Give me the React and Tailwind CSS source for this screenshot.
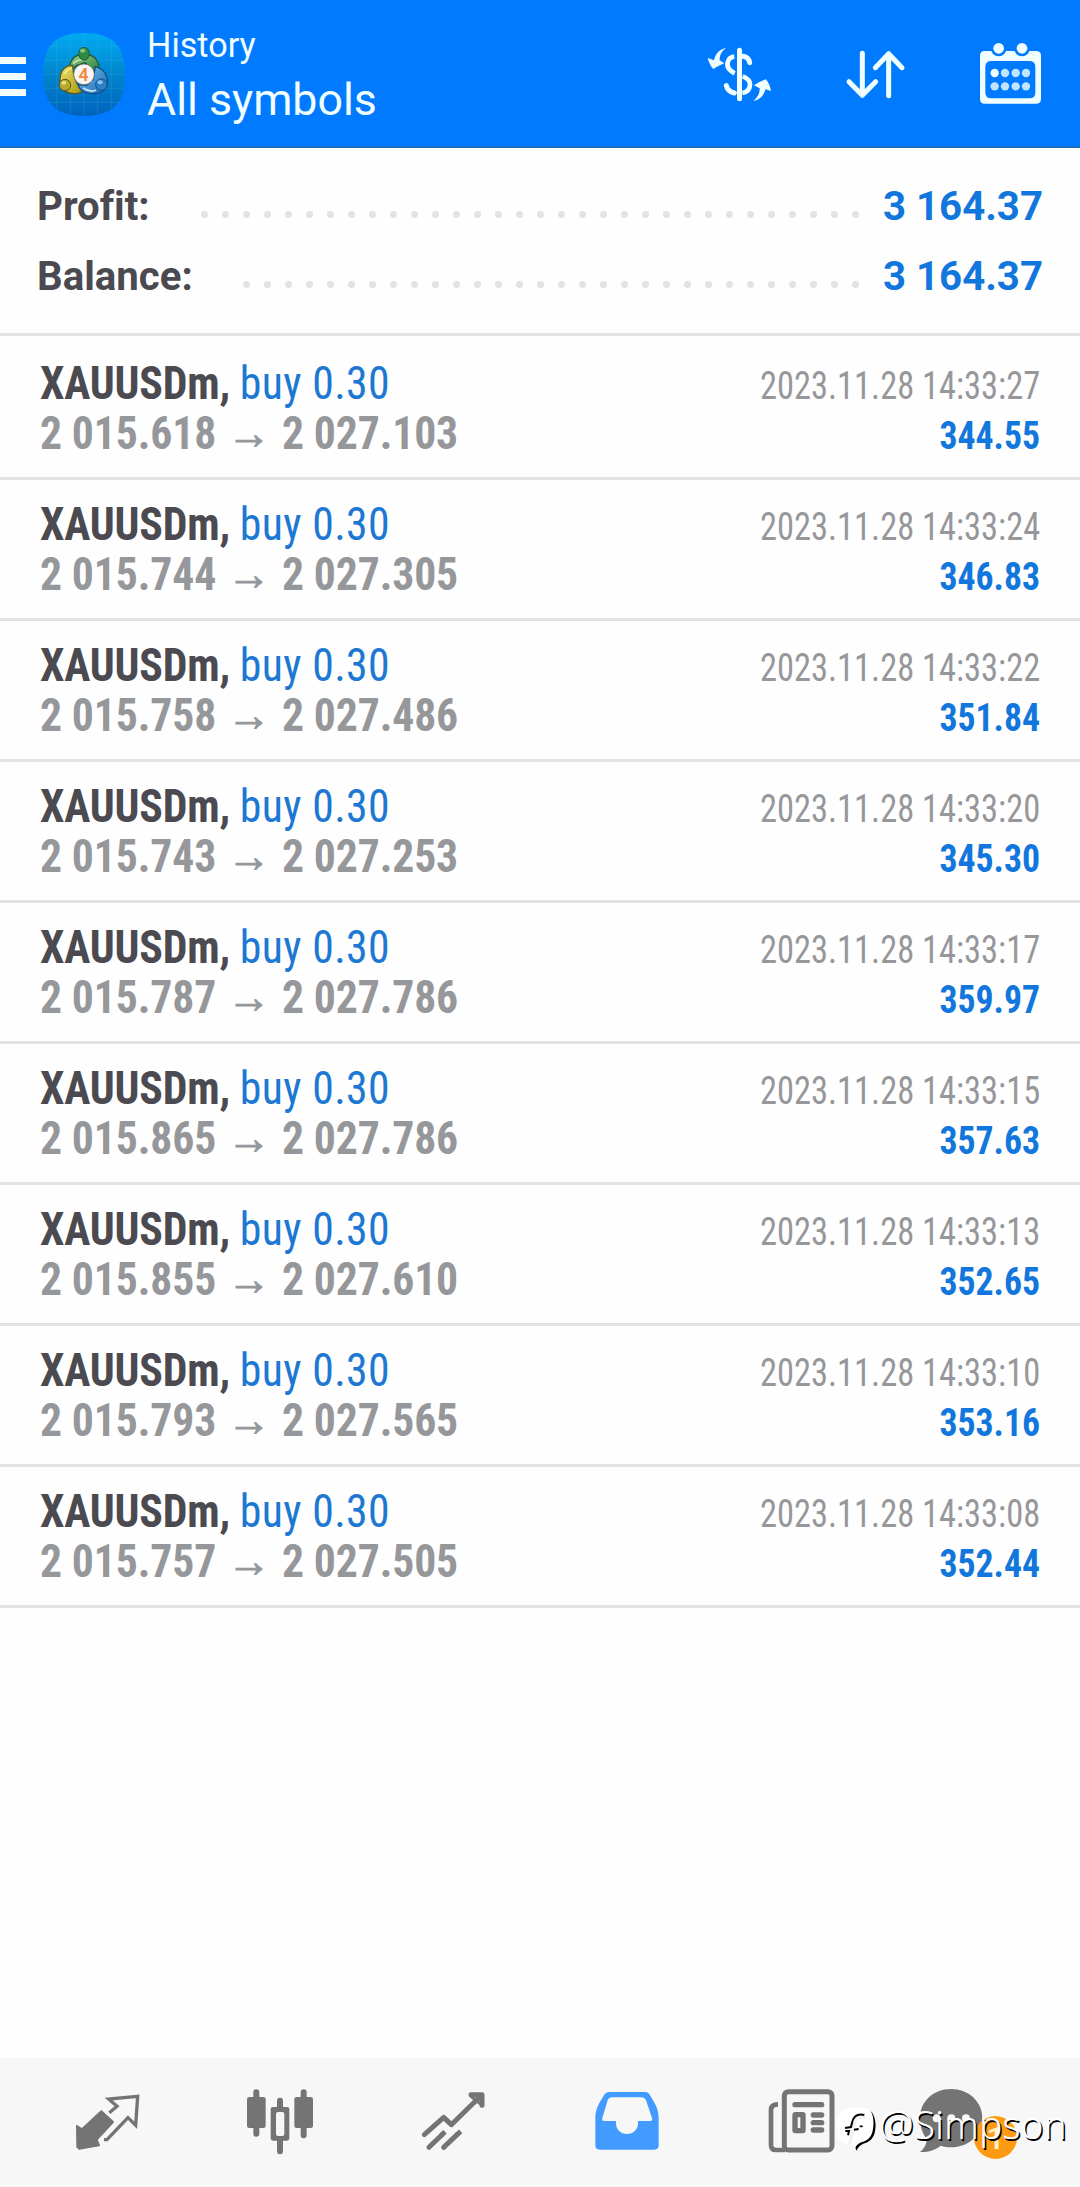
import React from "react";

const deals = [
  { open: "2 015.618", close: "2 027.103", time: "14:33:27", profit: "344.55" },
  { open: "2 015.744", close: "2 027.305", time: "14:33:24", profit: "346.83" },
  { open: "2 015.758", close: "2 027.486", time: "14:33:22", profit: "351.84" },
  { open: "2 015.743", close: "2 027.253", time: "14:33:20", profit: "345.30" },
  { open: "2 015.787", close: "2 027.786", time: "14:33:17", profit: "359.97" },
  { open: "2 015.865", close: "2 027.786", time: "14:33:15", profit: "357.63" },
  { open: "2 015.855", close: "2 027.610", time: "14:33:13", profit: "352.65" },
  { open: "2 015.793", close: "2 027.565", time: "14:33:10", profit: "353.16" },
  { open: "2 015.757", close: "2 027.505", time: "14:33:08", profit: "352.44" },
];

const AppLogo = () => (
  <svg viewBox="39 39 246 249" className="w-[82px] h-[83px]">
    <defs>
      <linearGradient id="tile" x1="0" y1="0" x2="0" y2="1">
        <stop offset="0" stopColor="#00aaf2" />
        <stop offset="0.5" stopColor="#0086cc" />
        <stop offset="1" stopColor="#0062bd" />
      </linearGradient>
      <linearGradient id="green" x1="0" y1="0" x2="1" y2="1">
        <stop offset="0" stopColor="#9fd08c" />
        <stop offset="1" stopColor="#1f7a35" />
      </linearGradient>
      <linearGradient id="yellow" x1="0" y1="0" x2="1" y2="1">
        <stop offset="0" stopColor="#efe36a" />
        <stop offset="1" stopColor="#a8960f" />
      </linearGradient>
      <linearGradient id="blue" x1="0" y1="0" x2="1" y2="1">
        <stop offset="0" stopColor="#7cc4f2" />
        <stop offset="1" stopColor="#1667ae" />
      </linearGradient>
    </defs>
    <path
      d="M162 39C248 39 285 76 285 163C285 250 248 288 162 288C76 288 39 250 39 163C39 76 76 39 162 39Z"
      fill="url(#tile)"
    />
    <g stroke="#5fc0ee" strokeOpacity="0.28" strokeWidth="2">
      <path d="M55 80H269M41 121H283M39 163H285M42 205H282M55 247H269" />
      <path d="M80 58V269M121 43V284M162 39V288M203 43V284M244 58V269" />
    </g>
    {/* three traders round the disc */}
    <g strokeLinejoin="round">
      <path d="M119 156C116 126 130 108 148 105H176C198 108 211 130 206 158L184 146L166 128L140 136Z" fill="url(#green)" stroke="#1d5a35" strokeWidth="4" />
      <path d="M128 136C102 136 88 154 90 190C94 210 112 222 134 221C146 221 154 218 158 212L140 190L131 164Z" fill="url(#yellow)" stroke="#5c5a18" strokeWidth="4" />
      <path d="M196 140C222 146 236 168 231 196C224 216 202 224 180 221C160 218 148 206 144 194L170 196L190 176Z" fill="url(#blue)" stroke="#124f86" strokeWidth="4" />
      <path d="M130 131C138 122 148 118 158 120" fill="none" stroke="#d4efc8" strokeWidth="4" />
      <path d="M104 162C108 152 116 146 126 145" fill="none" stroke="#faf5b4" strokeWidth="4" />
      <path d="M160 204C172 213 186 215 198 211" fill="none" stroke="#c6e6fb" strokeWidth="5" />
      <ellipse cx="162" cy="101" rx="16" ry="19" fill="#2f8c3f" stroke="#1d5a35" strokeWidth="3" />
      <circle cx="105" cy="195" r="17" fill="#b7aa2c" stroke="#5c5a18" strokeWidth="3" />
      <circle cx="214" cy="194" r="17" fill="#2c80c8" stroke="#124f86" strokeWidth="3" />
      <ellipse cx="158" cy="92" rx="8" ry="6" fill="#9ad291" fillOpacity="0.8" />
      <ellipse cx="101" cy="188" rx="8" ry="6" fill="#efe794" fillOpacity="0.8" />
      <ellipse cx="210" cy="187" rx="8" ry="6" fill="#a4d4f6" fillOpacity="0.8" />
    </g>
    <circle cx="162" cy="163" r="31" fill="#f6f6f6" stroke="#6b6b50" strokeWidth="2" />
    <text x="161" y="182" textAnchor="middle" fontSize="53" fontWeight="600" fontFamily="Roboto, sans-serif" fill="#f08a3c">
      4
    </text>
  </svg>
);

const DollarIcon = () => (
  <svg viewBox="81 81 195 168" className="w-[65px] h-[56px]" fill="none" stroke="#f0feff" strokeLinecap="round">
    <path d="M178.500 91V236" strokeWidth="15" />
    <path d="M163 110C141 112 138 137 148 148C153 154 158 157 164 160" strokeWidth="14" strokeLinecap="butt" />
    <path d="M188 109C200 110 207 117 209 128" strokeWidth="15" />
    <path d="M188 169C204 175 211 183 210 195C209 208 202 217 187 219" strokeWidth="14" strokeLinecap="butt" />
    <path d="M139 197C142 209 150 216 163 219" strokeWidth="15" />
    <path d="M139 84C126 91 118 106 119 121L133 130C126 134 112 139 100 147C93 140 86 127 83 114L102 121C106 101 119 87 139 84Z" fill="#f0feff" stroke="none" />
    <path d="M220 243C234 232 240 217 239 205L222 196C231 189 244 182 258 178C265 187 271 199 273 213L256 208C252 226 240 239 220 243Z" fill="#f0feff" stroke="none" />
  </svg>
);

const SortIcon = () => (
  <svg viewBox="495 87 183 150" className="w-[61px] h-[50px]" fill="none" stroke="#f0feff" strokeWidth="15" strokeLinecap="round" strokeLinejoin="round">
    <path d="M547 100V225M507 185L547 226L587 185" />
    <path d="M626 227V101M586 143L626 101L666 143" />
  </svg>
);

const CalendarIcon = () => (
  <svg viewBox="894 63 195 195" className="w-[65px] h-[65px]">
    <path
      fillRule="evenodd"
      d="M914 93H1068Q1083 93 1083 107V236Q1083 251 1068 251H914Q900 251 900 236V107Q900 93 914 93ZM934 123Q916 123 916 140V218Q916 235 934 235H1048Q1066 235 1066 218V140Q1066 123 1048 123Z"
      fill="#f0feff"
    />
    <circle cx="956" cy="85" r="24" fill="#007aff" />
    <circle cx="1026" cy="85" r="24" fill="#007aff" />
    <circle cx="956" cy="85" r="16" fill="#f0feff" />
    <circle cx="1026" cy="85" r="16" fill="#f0feff" />
    <circle cx="944" cy="159" r="12.500" fill="#f0feff" />
    {[975, 1007, 1038].map((x) => (
      <circle key={x} cx={x} cy="159" r="12.500" fill="#c0e6ff" />
    ))}
    {[944, 975, 1007, 1038].map((x) => (
      <circle key={x} cx={x} cy="199" r="12.500" fill="#c0e6ff" />
    ))}
  </svg>
);

const QuotesIcon = () => (
  <svg viewBox="222 129 201 174" className="w-[67px] h-[58px]">
    <path
      d="M304 184L339 216L290 269L297 286L238 296L232 291L231 228L246 238Z"
      fill="#747474"
      stroke="#747474"
      strokeWidth="6"
      strokeLinejoin="round"
    />
    <path
      d="M328 188L351 169L326 147L413 139L407 226L384 203L321 269H312"
      fill="none"
      stroke="#747474"
      strokeWidth="10"
    />
  </svg>
);

const ChartIcon = () => (
  <svg viewBox="735 114 210 204" className="w-[70px] h-[68px]">
    <g stroke="#747474" strokeWidth="18" strokeLinecap="round">
      <path d="M769 127V251M911 127V256M840 152V175M840 270V304" />
    </g>
    <rect x="741" y="141" width="56" height="93" rx="7" fill="#747474" />
    <rect x="883" y="141" width="56" height="93" rx="7" fill="#747474" />
    <rect x="812" y="171" width="56" height="101" rx="7" fill="#747474" />
    <rect x="828" y="186" width="25" height="72" rx="6" fill="#f7f7f7" />
  </svg>
);

const TradeIcon = () => (
  <svg viewBox="180 120 201 186" className="w-[67px] h-[62px]" fill="none" stroke="#747474" strokeWidth="15" strokeLinejoin="round" strokeLinecap="round">
    <path d="M193 254L251 202L274 224L362 138" />
    <path d="M333 134H366V166" />
    <path d="M334 140L360 161" strokeWidth="9" />
    <path d="M207 292L246 254M251 292L292 253" />
    <path d="M244 256L255 245M291 254L302 244" strokeLinecap="butt" />
  </svg>
);

const HistoryIcon = () => (
  <svg viewBox="699 120 204 186" className="w-[68px] h-[62px]">
    <path
      fillRule="evenodd"
      d="M748 126H855Q865 126 870 136C885 160 896 178 896 204V286Q896 299 883 299H719Q706 299 706 286V204C706 178 718 158 732 136Q738 126 748 126ZM757 142Q747 142 743 151L727 204Q725 213 733 213H768V220C768 239 782 252 801 252C820 252 834 239 834 220V213H870Q879 213 876 204L858 151Q854 142 844 142Z"
      fill="#429bff"
    />
  </svg>
);

const NewsIcon = () => (
  <svg viewBox="141 111 207 204" className="w-[69px] h-[68px]">
    <path d="M174 163C160 163 153 169 153 180V284Q153 300 169 300H195" fill="none" stroke="#747474" strokeWidth="14" />
    <rect x="193" y="125" width="143" height="175" rx="12" fill="#f7f7f7" stroke="#747474" strokeWidth="15" />
    <path d="M225 164H305M280 195H305M280 218H305M280 240H305" stroke="#747474" strokeWidth="16" strokeLinecap="round" />
    <rect x="225" y="194" width="24" height="48" rx="1" fill="none" stroke="#747474" strokeWidth="16" strokeLinejoin="round" />
  </svg>
);

const ChatIcon = () => (
  <svg viewBox="594 111 201 204" className="w-[67px] h-[68px]">
    <path
      d="M693 117C746 117 787 155 787 204C787 255 746 292 693 292C682 292 671 290 662 287C646 300 624 307 600 306C612 296 620 284 620 267C607 250 600 229 600 204C600 155 640 117 693 117Z"
      fill="#747474"
    />
    {[650, 694, 738].map((x) => (
      <circle key={x} cx={x} cy="205" r="12" fill="#f7f7f7" />
    ))}
  </svg>
);

const WatermarkLogo = () => (
  <svg viewBox="348 168 120 138" className="w-[40px] h-[46px]">
    <path d="M430 180C444 176 455 183 460 194C468 212 468 232 464 248C459 266 448 276 430 281C420 285 414 292 409 302L405 288L440 262Z" fill="#000" />
    <path d="M362 186C380 169 430 169 447 178C461 189 463 219 458 242C454 262 443 271 426 276C415 279 409 286 404 296L399 285C379 286 362 276 354 262C347 238 347 202 362 186Z" fill="#fff" />
    <path d="M436 203C414 196 404 208 401 234L388 284" fill="none" stroke="#f1f1f1" strokeWidth="9" />
    <path d="M433 195C410 190 400 200 396 218L393 231L375 234M376 243H387L384 256M402 239L416 237" fill="none" stroke="#000" strokeWidth="6" />
    <path d="M419 229H428" stroke="#000" strokeWidth="5" />
  </svg>
);

const Summary = ({ label, value, dots }) => (
  <div className="flex h-[70px] items-center pl-[37px] pr-[37px] text-[40.2px] leading-[70px] font-bold">
    <span className="pt-[2px] text-[#4a4a50] [font-variant-ligatures:none]">{label}</span>
    <div className="ml-auto mr-[24px] mb-[23px] flex gap-[14px] self-end">
      {Array.from({ length: dots }).map((_, i) => (
        <span key={i} className="size-[7px] rounded-full bg-[#e3e3e3]" />
      ))}
    </div>
    <span className="pt-[2px] text-[#1277dc]">{value}</span>
  </div>
);

const Deal = ({ deal }) => (
  <div className="h-[141px] border-b-[3px] border-[#e3e3e3] pt-[19px] pl-10 pr-10 [font-stretch:75%] whitespace-pre">
    <div className="flex h-[50px] items-baseline justify-between">
      <p className="origin-left scale-x-95 text-[46px] leading-[50px]">
        <span className="font-bold tracking-[-0.2px] text-[#4a4a50]">XAUUSDm, </span>
        <span className="tracking-[0.4px] text-[#1c78d2]">buy 0.30</span>
      </p>
      <p className="origin-right scale-x-[0.906] text-[38px] leading-[48px] text-[#96979b]">2023.11.28 {deal.time}</p>
    </div>
    <div className="flex items-baseline justify-between">
      <p className="origin-left scale-x-95 text-[46px] leading-[50px] font-bold tracking-[-0.15px] text-[#96979b]">
        {deal.open}
        <span className="mx-[1.3px] [-webkit-text-stroke:1px_#96979b]"> → </span>
        {deal.close}
      </p>
      <p className="origin-right scale-x-94 text-[38px] leading-[48px] font-bold text-[#1277dc]">{deal.profit}</p>
    </div>
  </div>
);

const App = () => {
  return (
    <div className="flex h-[2187px] w-[1080px] flex-col overflow-hidden bg-[#fefefe] font-['Roboto',sans-serif]">
      <header className="flex h-[148px] shrink-0 items-start border-b-2 border-[#1a6fc4] bg-[#007aff] pr-[37px] text-[#f0feff]">
        <div className="mt-[57px] flex w-[26px] flex-col gap-[9px]">
          <span className="h-[7px] bg-[#f0feff]" />
          <span className="h-[7px] bg-[#f0feff]" />
          <span className="h-[7px] bg-[#f0feff]" />
        </div>
        <div className="mt-[33px] ml-[17px]">
          <AppLogo />
        </div>
        <div className="mt-[25px] ml-[22px]">
          <p className="text-[34.2px] leading-[40px]">History</p>
          <p className="mt-[7px] text-[44.7px] leading-[56px]">All symbols</p>
        </div>
        <div className="ml-auto flex">
          <div className="mt-[47px]">
            <DollarIcon />
          </div>
          <div className="mt-[49px] ml-[73px]">
            <SortIcon />
          </div>
          <div className="mt-[41px] ml-[72px]">
            <CalendarIcon />
          </div>
        </div>
      </header>

      <section className="border-b-[3px] border-[#e3e3e3] pt-[23px] pb-[22px]">
        <Summary label="Profit:" value="3 164.37" dots={32} />
        <Summary label="Balance:" value="3 164.37" dots={30} />
      </section>

      <main className="grow pt-[3px]">
        {deals.map((deal) => (
          <Deal key={deal.time} deal={deal} />
        ))}
      </main>

      <nav className="relative flex h-[129px] shrink-0 items-start bg-[#f7f7f7] pl-[74px]">
        <div className="mt-[35px]">
          <QuotesIcon />
        </div>
        <div className="mt-[30px] ml-[104px]">
          <ChartIcon />
        </div>
        <div className="mt-[32px] ml-[105px]">
          <TradeIcon />
        </div>
        <div className="mt-[32px] ml-[106px]">
          <HistoryIcon />
        </div>
        <div className="mt-[29px] ml-[106px]">
          <NewsIcon />
        </div>
        <div className="relative mt-[29px] ml-[82px]">
          <ChatIcon />
          <span className="absolute top-[29px] left-[56px] flex size-[43px] items-center justify-center rounded-full bg-[#ff9a14] text-[32px] leading-none font-medium text-[#fff0c0]">
            1
          </span>
        </div>
        <div className="absolute top-[48px] left-[836px] flex">
          <WatermarkLogo />
          <span className="mt-[-5px] ml-[3px] font-['Noto_Sans'] text-[39px] leading-[46px] font-[350] text-white [text-shadow:1.5px_1.5px_0_#000]">
            @Simpson
          </span>
        </div>
      </nav>
    </div>
  );
};

export default App;
